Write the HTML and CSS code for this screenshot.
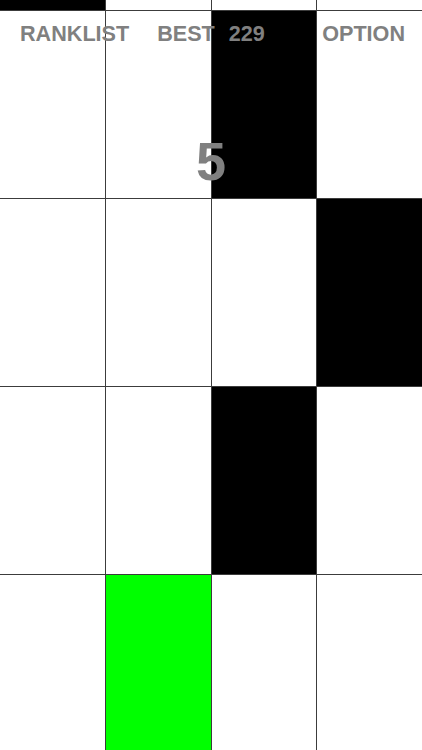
FILE: index.html
```html
<!DOCTYPE html>
<html>
<head>
<meta charset="utf-8">
<link rel="stylesheet" href="styles.css">
</head>
<body>
<div class="game">
  <div class="board">
    <div class="tile black"></div><div class="tile"></div><div class="tile"></div><div class="tile"></div>
    <div class="tile"></div><div class="tile"></div><div class="tile black"></div><div class="tile"></div>
    <div class="tile"></div><div class="tile"></div><div class="tile"></div><div class="tile black"></div>
    <div class="tile"></div><div class="tile"></div><div class="tile black"></div><div class="tile"></div>
    <div class="tile"></div><div class="tile green"></div><div class="tile"></div><div class="tile"></div>
  </div>
  <div class="hud">
    <span class="btn">RANKLIST</span>
    <span class="best">BEST</span>
    <span class="best-val">229</span>
    <span class="btn option">OPTION</span>
  </div>
  <div class="score">5</div>
</div>
</body>
</html>
```
FILE: styles.css
```css
html, body {
  margin: 0;
  padding: 0;
  background: #fff;
}
.game {
  position: relative;
  width: 422px;
  height: 750px;
  overflow: hidden;
  font-family: "Liberation Sans", Arial, sans-serif;
}
.board {
  display: grid;
  grid-template-columns: repeat(4, 1fr);
  grid-template-rows: 10px 187px 187px 187px 1fr;
  gap: 1px;
  background: #3c3c3c;
  width: 422px;
  height: 750px;
}
.tile {
  background: #fff;
}
.tile.black {
  background: #000;
}
.tile.green {
  background: #00ff00;
}
.hud {
  position: absolute;
  top: 22px;
  left: 0;
  right: 0;
  display: flex;
  align-items: baseline;
  padding: 0 17px 0 20px;
  font-size: 21.6px;
  font-weight: bold;
  color: #808080;
  line-height: 24px;
}
.best {
  margin-left: 28px;
}
.best-val {
  margin-left: 14px;
}
.option {
  margin-left: auto;
}
.score {
  position: absolute;
  top: 131px;
  left: 0;
  right: 0;
  text-align: center;
  font-size: 54px;
  font-weight: bold;
  color: #808080;
  line-height: 60px;
}
```
